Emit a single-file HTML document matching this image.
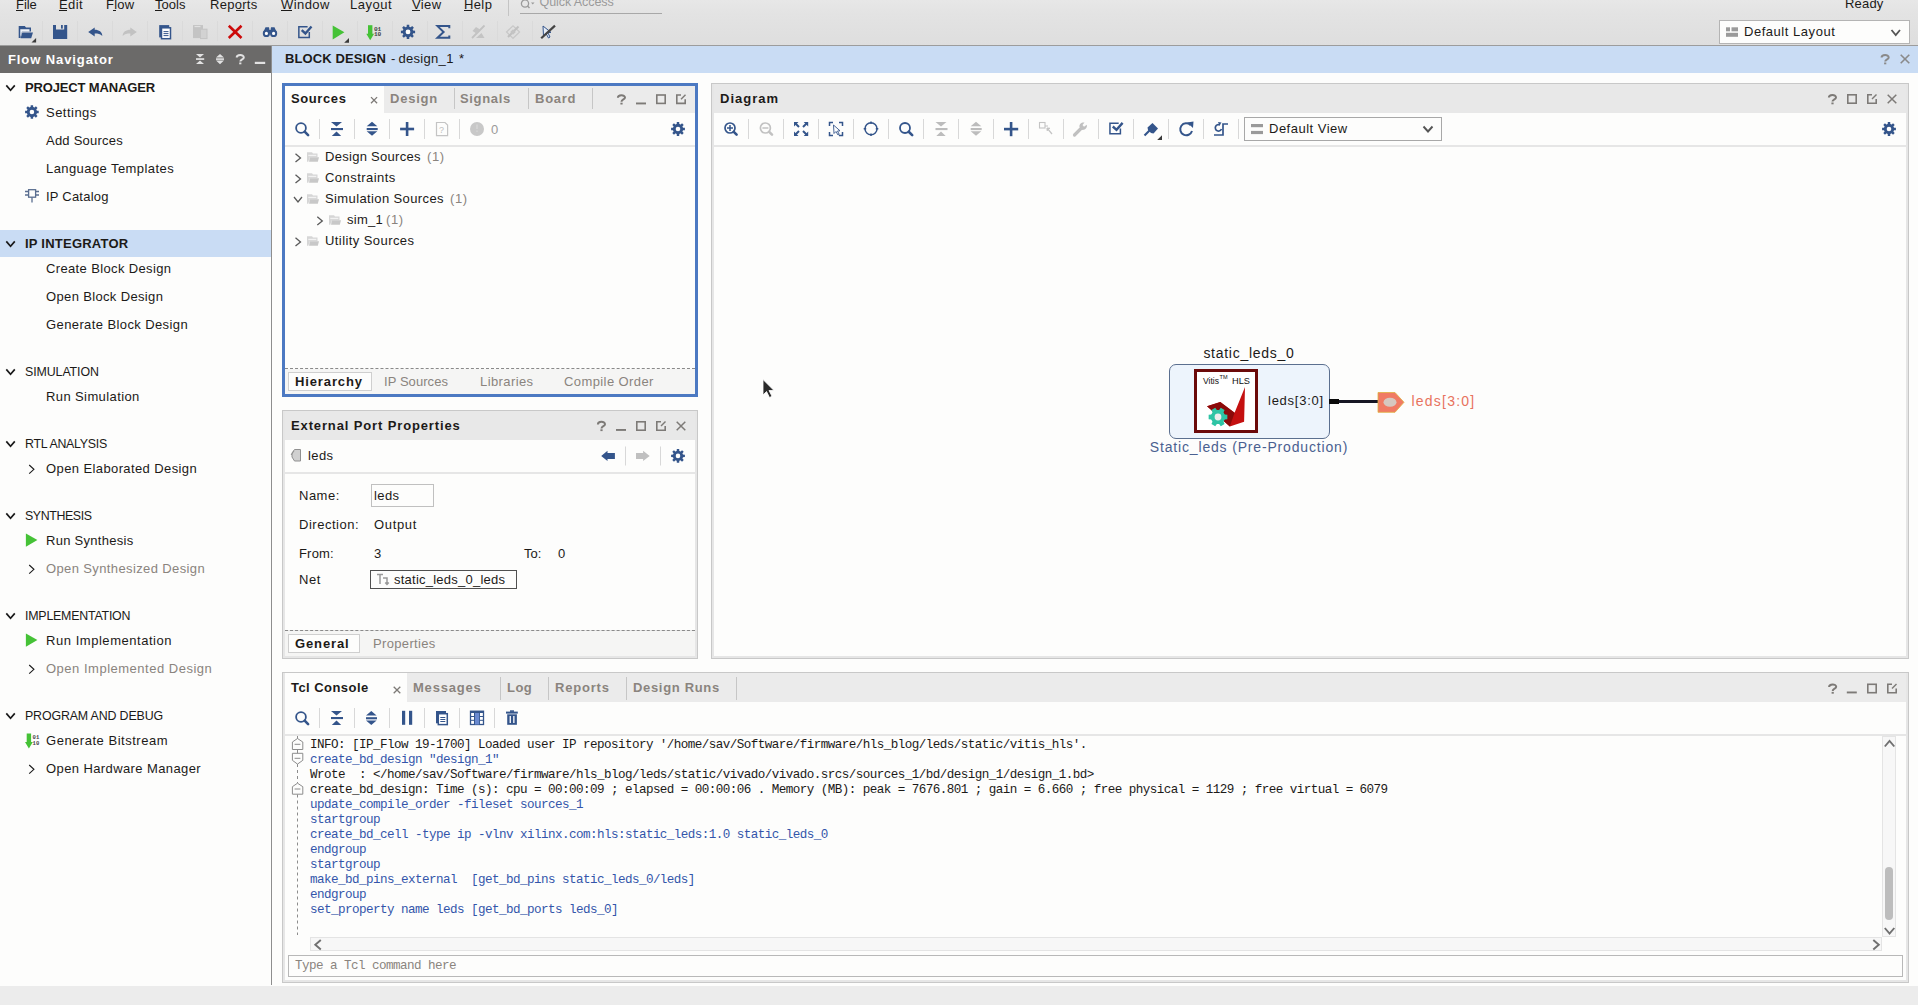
<!DOCTYPE html>
<html><head><meta charset="utf-8"><style>
html,body{margin:0;padding:0;}
body{width:1918px;height:1005px;position:relative;overflow:hidden;background:#fdfdfc;font-family:"Liberation Sans",sans-serif;}
body>div,body>svg{position:absolute;}
.t{white-space:pre;}
</style></head><body>
<div style="left:0px;top:0px;width:1918px;height:45px;background:linear-gradient(#e7e7e7,#e3e3e3 30%,#dedede);"></div>
<div style="left:0px;top:45px;width:1918px;height:1px;background:#9c9c9c;"></div>
<div class="t" style="left:16.00px;top:-5.50px;font-family:'Liberation Sans',sans-serif;font-size:13px;line-height:20px;color:#1c1a18;letter-spacing:-0.055px;">File</div>
<div class="t" style="left:59.00px;top:-5.50px;font-family:'Liberation Sans',sans-serif;font-size:13px;line-height:20px;color:#1c1a18;letter-spacing:0.398px;">Edit</div>
<div class="t" style="left:106.00px;top:-5.50px;font-family:'Liberation Sans',sans-serif;font-size:13px;line-height:20px;color:#1c1a18;letter-spacing:0.211px;">Flow</div>
<div class="t" style="left:155.00px;top:-5.50px;font-family:'Liberation Sans',sans-serif;font-size:13px;line-height:20px;color:#1c1a18;letter-spacing:0.034px;">Tools</div>
<div class="t" style="left:210.00px;top:-5.50px;font-family:'Liberation Sans',sans-serif;font-size:13px;line-height:20px;color:#1c1a18;letter-spacing:0.286px;">Reports</div>
<div class="t" style="left:281.00px;top:-5.50px;font-family:'Liberation Sans',sans-serif;font-size:13px;line-height:20px;color:#1c1a18;letter-spacing:0.435px;">Window</div>
<div class="t" style="left:350.00px;top:-5.50px;font-family:'Liberation Sans',sans-serif;font-size:13px;line-height:20px;color:#1c1a18;letter-spacing:0.513px;">Layout</div>
<div class="t" style="left:412.00px;top:-5.50px;font-family:'Liberation Sans',sans-serif;font-size:13px;line-height:20px;color:#1c1a18;letter-spacing:0.363px;">View</div>
<div class="t" style="left:464.00px;top:-5.50px;font-family:'Liberation Sans',sans-serif;font-size:13px;line-height:20px;color:#1c1a18;letter-spacing:0.375px;">Help</div>
<div style="left:508px;top:0px;width:1px;height:16px;background:#c4c4c4;"></div>
<div style="left:16px;top:10px;width:7px;height:1px;background:#1c1a18;"></div>
<div style="left:59px;top:10px;width:8px;height:1px;background:#1c1a18;"></div>
<div style="left:113px;top:10px;width:3px;height:1px;background:#1c1a18;"></div>
<div style="left:155px;top:10px;width:7px;height:1px;background:#1c1a18;"></div>
<div style="left:236px;top:10px;width:8px;height:1px;background:#1c1a18;"></div>
<div style="left:281px;top:10px;width:11px;height:1px;background:#1c1a18;"></div>
<div style="left:375px;top:10px;width:7px;height:1px;background:#1c1a18;"></div>
<div style="left:412px;top:10px;width:8px;height:1px;background:#1c1a18;"></div>
<div style="left:464px;top:10px;width:8px;height:1px;background:#1c1a18;"></div>
<div class="t" style="left:539.60px;top:-8.33px;font-family:'Liberation Sans',sans-serif;font-size:12.5px;line-height:20px;color:#9a9a9a;letter-spacing:-0.086px;">Quick Access</div>
<div style="left:520px;top:13px;width:142px;height:1px;background:#a8a8a8;"></div>
<div class="t" style="left:1845.00px;top:-6.50px;font-family:'Liberation Sans',sans-serif;font-size:13px;line-height:20px;color:#1c1a18;letter-spacing:0.178px;">Ready</div>
<div style="left:0px;top:46px;width:271px;height:27px;background:#6b6a69;"></div>
<div class="t" style="left:8.00px;top:49.50px;font-family:'Liberation Sans',sans-serif;font-size:13px;line-height:20px;color:#ffffff;font-weight:bold;letter-spacing:0.903px;">Flow Navigator</div>
<div style="left:271px;top:46px;width:1px;height:939px;background:#8e8e8e;"></div>
<div style="left:272px;top:46px;width:1646px;height:27px;background:#c9dcf4;"></div>
<div class="t" style="left:285.00px;top:48.50px;font-family:'Liberation Sans',sans-serif;font-size:13px;line-height:20px;color:#1c1a18;font-weight:bold;letter-spacing:0.111px;">BLOCK DESIGN</div>
<div class="t" style="left:391.00px;top:48.50px;font-family:'Liberation Sans',sans-serif;font-size:13px;line-height:20px;color:#1c1a18;">-</div>
<div class="t" style="left:398.50px;top:48.50px;font-family:'Liberation Sans',sans-serif;font-size:13px;line-height:20px;color:#1c1a18;letter-spacing:0.301px;">design_1</div>
<div class="t" style="left:459.00px;top:48.50px;font-family:'Liberation Sans',sans-serif;font-size:13px;line-height:20px;color:#1c1a18;">*</div>
<div style="left:0px;top:230px;width:271px;height:27px;background:#c9dcf4;"></div>
<div class="t" style="left:25.00px;top:77.50px;font-family:'Liberation Sans',sans-serif;font-size:13px;line-height:20px;color:#1c1a18;font-weight:bold;letter-spacing:-0.151px;">PROJECT MANAGER</div>
<div class="t" style="left:46.00px;top:102.50px;font-family:'Liberation Sans',sans-serif;font-size:13px;line-height:20px;color:#1c1a18;letter-spacing:0.480px;">Settings</div>
<div class="t" style="left:46.00px;top:130.50px;font-family:'Liberation Sans',sans-serif;font-size:13px;line-height:20px;color:#1c1a18;letter-spacing:0.229px;">Add Sources</div>
<div class="t" style="left:46.00px;top:158.50px;font-family:'Liberation Sans',sans-serif;font-size:13px;line-height:20px;color:#1c1a18;letter-spacing:0.424px;">Language Templates</div>
<div class="t" style="left:46.00px;top:186.50px;font-family:'Liberation Sans',sans-serif;font-size:13px;line-height:20px;color:#1c1a18;letter-spacing:0.219px;">IP Catalog</div>
<div class="t" style="left:25.00px;top:233.50px;font-family:'Liberation Sans',sans-serif;font-size:13px;line-height:20px;color:#1c1a18;font-weight:bold;letter-spacing:0.231px;">IP INTEGRATOR</div>
<div class="t" style="left:46.00px;top:258.50px;font-family:'Liberation Sans',sans-serif;font-size:13px;line-height:20px;color:#1c1a18;letter-spacing:0.360px;">Create Block Design</div>
<div class="t" style="left:46.00px;top:286.50px;font-family:'Liberation Sans',sans-serif;font-size:13px;line-height:20px;color:#1c1a18;letter-spacing:0.352px;">Open Block Design</div>
<div class="t" style="left:46.00px;top:314.50px;font-family:'Liberation Sans',sans-serif;font-size:13px;line-height:20px;color:#1c1a18;letter-spacing:0.398px;">Generate Block Design</div>
<div class="t" style="left:25.00px;top:361.70px;font-family:'Liberation Sans',sans-serif;font-size:12.4px;line-height:20px;color:#1c1a18;letter-spacing:-0.098px;">SIMULATION</div>
<div class="t" style="left:46.00px;top:386.50px;font-family:'Liberation Sans',sans-serif;font-size:13px;line-height:20px;color:#1c1a18;letter-spacing:0.396px;">Run Simulation</div>
<div class="t" style="left:25.00px;top:433.70px;font-family:'Liberation Sans',sans-serif;font-size:12.4px;line-height:20px;color:#1c1a18;letter-spacing:-0.273px;">RTL ANALYSIS</div>
<div class="t" style="left:46.00px;top:458.50px;font-family:'Liberation Sans',sans-serif;font-size:13px;line-height:20px;color:#1c1a18;letter-spacing:0.397px;">Open Elaborated Design</div>
<div class="t" style="left:25.00px;top:505.70px;font-family:'Liberation Sans',sans-serif;font-size:12.4px;line-height:20px;color:#1c1a18;letter-spacing:-0.399px;">SYNTHESIS</div>
<div class="t" style="left:46.00px;top:530.50px;font-family:'Liberation Sans',sans-serif;font-size:13px;line-height:20px;color:#1c1a18;letter-spacing:0.278px;">Run Synthesis</div>
<div class="t" style="left:46.00px;top:558.50px;font-family:'Liberation Sans',sans-serif;font-size:13px;line-height:20px;color:#8a847e;letter-spacing:0.379px;">Open Synthesized Design</div>
<div class="t" style="left:25.00px;top:605.70px;font-family:'Liberation Sans',sans-serif;font-size:12.4px;line-height:20px;color:#1c1a18;letter-spacing:-0.217px;">IMPLEMENTATION</div>
<div class="t" style="left:46.00px;top:630.50px;font-family:'Liberation Sans',sans-serif;font-size:13px;line-height:20px;color:#1c1a18;letter-spacing:0.542px;">Run Implementation</div>
<div class="t" style="left:46.00px;top:658.50px;font-family:'Liberation Sans',sans-serif;font-size:13px;line-height:20px;color:#8a847e;letter-spacing:0.507px;">Open Implemented Design</div>
<div class="t" style="left:25.00px;top:705.70px;font-family:'Liberation Sans',sans-serif;font-size:12.4px;line-height:20px;color:#1c1a18;letter-spacing:-0.148px;">PROGRAM AND DEBUG</div>
<div class="t" style="left:46.00px;top:730.50px;font-family:'Liberation Sans',sans-serif;font-size:13px;line-height:20px;color:#1c1a18;letter-spacing:0.517px;">Generate Bitstream</div>
<div class="t" style="left:46.00px;top:758.50px;font-family:'Liberation Sans',sans-serif;font-size:13px;line-height:20px;color:#1c1a18;letter-spacing:0.400px;">Open Hardware Manager</div>
<div style="left:282px;top:83px;width:416px;height:314px;border:3px solid #4c79c2;box-sizing:border-box;"></div>
<div style="left:285px;top:86px;width:410px;height:27px;background:#ebebeb;"></div>
<div style="left:285px;top:86px;width:99px;height:27px;background:#fdfdfc;"></div>
<div class="t" style="left:291.00px;top:88.50px;font-family:'Liberation Sans',sans-serif;font-size:13px;line-height:20px;color:#1c1a18;font-weight:bold;letter-spacing:0.598px;">Sources</div>
<div class="t" style="left:390.00px;top:88.50px;font-family:'Liberation Sans',sans-serif;font-size:13px;line-height:20px;color:#8a847e;font-weight:bold;letter-spacing:0.779px;">Design</div>
<div class="t" style="left:460.00px;top:88.50px;font-family:'Liberation Sans',sans-serif;font-size:13px;line-height:20px;color:#8a847e;font-weight:bold;letter-spacing:0.658px;">Signals</div>
<div class="t" style="left:535.00px;top:88.50px;font-family:'Liberation Sans',sans-serif;font-size:13px;line-height:20px;color:#8a847e;font-weight:bold;letter-spacing:0.750px;">Board</div>
<div style="left:454px;top:88px;width:1px;height:21px;background:#c6c6c6;"></div>
<div style="left:528px;top:88px;width:1px;height:21px;background:#c6c6c6;"></div>
<div style="left:592px;top:88px;width:1px;height:21px;background:#c6c6c6;"></div>
<div style="left:285px;top:113px;width:410px;height:32px;background:#fdfdfc;"></div>
<div style="left:285px;top:145px;width:410px;height:2px;background:#e6e6e6;"></div>
<div style="left:285px;top:147px;width:410px;height:221px;background:#fdfdfc;"></div>
<div style="left:285px;top:368px;width:410px;height:1px;border-top:1px dashed #8a8a8a;"></div>
<div style="left:285px;top:369px;width:410px;height:25px;background:#f5f5f4;"></div>
<div style="left:288px;top:372px;width:84px;height:19px;background:#fdfdfc;border:1px solid #cfcfcf;box-sizing:border-box;"></div>
<div class="t" style="left:295.00px;top:371.50px;font-family:'Liberation Sans',sans-serif;font-size:13px;line-height:20px;color:#1c1a18;font-weight:bold;letter-spacing:0.875px;">Hierarchy</div>
<div class="t" style="left:384.00px;top:371.50px;font-family:'Liberation Sans',sans-serif;font-size:13px;line-height:20px;color:#8a847e;letter-spacing:0.072px;">IP Sources</div>
<div class="t" style="left:480.00px;top:371.50px;font-family:'Liberation Sans',sans-serif;font-size:13px;line-height:20px;color:#8a847e;letter-spacing:0.406px;">Libraries</div>
<div class="t" style="left:564.00px;top:371.50px;font-family:'Liberation Sans',sans-serif;font-size:13px;line-height:20px;color:#8a847e;letter-spacing:0.407px;">Compile Order</div>
<div class="t" style="left:325.00px;top:146.50px;font-family:'Liberation Sans',sans-serif;font-size:13px;line-height:20px;color:#1c1a18;letter-spacing:0.282px;">Design Sources</div>
<div class="t" style="left:325.00px;top:167.50px;font-family:'Liberation Sans',sans-serif;font-size:13px;line-height:20px;color:#1c1a18;letter-spacing:0.450px;">Constraints</div>
<div class="t" style="left:325.00px;top:188.50px;font-family:'Liberation Sans',sans-serif;font-size:13px;line-height:20px;color:#1c1a18;letter-spacing:0.386px;">Simulation Sources</div>
<div class="t" style="left:347.00px;top:209.50px;font-family:'Liberation Sans',sans-serif;font-size:13px;line-height:20px;color:#1c1a18;letter-spacing:0.272px;">sim_1</div>
<div class="t" style="left:325.00px;top:230.50px;font-family:'Liberation Sans',sans-serif;font-size:13px;line-height:20px;color:#1c1a18;letter-spacing:0.422px;">Utility Sources</div>
<div class="t" style="left:427.00px;top:146.50px;font-family:'Liberation Sans',sans-serif;font-size:13px;line-height:20px;color:#8a847e;letter-spacing:0.557px;">(1)</div>
<div class="t" style="left:450.00px;top:188.50px;font-family:'Liberation Sans',sans-serif;font-size:13px;line-height:20px;color:#8a847e;letter-spacing:0.557px;">(1)</div>
<div class="t" style="left:386.00px;top:209.50px;font-family:'Liberation Sans',sans-serif;font-size:13px;line-height:20px;color:#8a847e;letter-spacing:0.557px;">(1)</div>
<div class="t" style="left:491.00px;top:119.50px;font-family:'Liberation Sans',sans-serif;font-size:13px;line-height:20px;color:#9a9a9a;">0</div>
<div style="left:282px;top:410px;width:416px;height:249px;background:#e6e6e6;border:1px solid #c8c8c8;box-sizing:border-box;"></div>
<div style="left:285px;top:411px;width:410px;height:29px;background:#e8e8e8;"></div>
<div class="t" style="left:291.00px;top:415.50px;font-family:'Liberation Sans',sans-serif;font-size:13px;line-height:20px;color:#1c1a18;font-weight:bold;letter-spacing:0.867px;">External Port Properties</div>
<div style="left:285px;top:440px;width:410px;height:32px;background:#fdfdfc;"></div>
<div style="left:285px;top:472px;width:410px;height:2px;background:#e6e6e6;"></div>
<div style="left:285px;top:474px;width:410px;height:156px;background:#fdfdfc;"></div>
<div class="t" style="left:308.00px;top:445.50px;font-family:'Liberation Sans',sans-serif;font-size:13px;line-height:20px;color:#1c1a18;letter-spacing:0.383px;">leds</div>
<div class="t" style="left:299.00px;top:485.50px;font-family:'Liberation Sans',sans-serif;font-size:13px;line-height:20px;color:#1c1a18;letter-spacing:0.487px;">Name:</div>
<div style="left:371px;top:484px;width:63px;height:23px;background:#fdfdfc;border:1px solid #c0c0c0;box-sizing:border-box;"></div>
<div class="t" style="left:374.00px;top:485.50px;font-family:'Liberation Sans',sans-serif;font-size:13px;line-height:20px;color:#1c1a18;letter-spacing:0.383px;">leds</div>
<div class="t" style="left:299.00px;top:514.50px;font-family:'Liberation Sans',sans-serif;font-size:13px;line-height:20px;color:#1c1a18;letter-spacing:0.523px;">Direction:</div>
<div class="t" style="left:374.00px;top:514.50px;font-family:'Liberation Sans',sans-serif;font-size:13px;line-height:20px;color:#1c1a18;letter-spacing:0.669px;">Output</div>
<div class="t" style="left:299.00px;top:543.50px;font-family:'Liberation Sans',sans-serif;font-size:13px;line-height:20px;color:#1c1a18;letter-spacing:0.184px;">From:</div>
<div class="t" style="left:374.00px;top:543.50px;font-family:'Liberation Sans',sans-serif;font-size:13px;line-height:20px;color:#1c1a18;">3</div>
<div class="t" style="left:524.00px;top:543.50px;font-family:'Liberation Sans',sans-serif;font-size:13px;line-height:20px;color:#1c1a18;letter-spacing:-0.042px;">To:</div>
<div class="t" style="left:558.00px;top:543.50px;font-family:'Liberation Sans',sans-serif;font-size:13px;line-height:20px;color:#1c1a18;">0</div>
<div class="t" style="left:299.00px;top:569.50px;font-family:'Liberation Sans',sans-serif;font-size:13px;line-height:20px;color:#1c1a18;letter-spacing:0.510px;">Net</div>
<div style="left:370px;top:570px;width:147px;height:19px;background:#fdfdfc;border:1px solid #505050;box-sizing:border-box;"></div>
<div class="t" style="left:394.00px;top:569.50px;font-family:'Liberation Sans',sans-serif;font-size:13px;line-height:20px;color:#1c1a18;letter-spacing:0.239px;">static_leds_0_leds</div>
<div style="left:285px;top:630px;width:410px;height:1px;border-top:1px dashed #8a8a8a;"></div>
<div style="left:285px;top:631px;width:410px;height:25px;background:#f5f5f4;"></div>
<div style="left:288px;top:634px;width:72px;height:19px;background:#fdfdfc;border:1px solid #cfcfcf;box-sizing:border-box;"></div>
<div class="t" style="left:295.00px;top:633.50px;font-family:'Liberation Sans',sans-serif;font-size:13px;line-height:20px;color:#1c1a18;font-weight:bold;letter-spacing:0.873px;">General</div>
<div class="t" style="left:373.00px;top:633.50px;font-family:'Liberation Sans',sans-serif;font-size:13px;line-height:20px;color:#8a847e;letter-spacing:0.338px;">Properties</div>
<div style="left:711px;top:83px;width:198px;height:1px;"></div>
<div style="left:711px;top:83px;width:198px;height:576px;background:#e6e6e6;border:1px solid #c8c8c8;box-sizing:border-box;"></div>
<div style="left:711px;top:83px;width:1198px;height:576px;background:#e6e6e6;border:1px solid #c8c8c8;box-sizing:border-box;"></div>
<div style="left:714px;top:84px;width:1192px;height:29px;background:#e8e8e8;"></div>
<div class="t" style="left:720.00px;top:88.50px;font-family:'Liberation Sans',sans-serif;font-size:13px;line-height:20px;color:#1c1a18;font-weight:bold;letter-spacing:1.018px;">Diagram</div>
<div style="left:714px;top:113px;width:1192px;height:32px;background:#fdfdfc;"></div>
<div style="left:714px;top:145px;width:1192px;height:2px;background:#e6e6e6;"></div>
<div style="left:714px;top:147px;width:1192px;height:509px;background:#fdfdfc;"></div>
<div style="left:1244px;top:117px;width:198px;height:24px;background:#fdfdfc;border:1px solid #a8a8a8;box-sizing:border-box;"></div>
<div class="t" style="left:1269.00px;top:118.50px;font-family:'Liberation Sans',sans-serif;font-size:13px;line-height:20px;color:#1c1a18;letter-spacing:0.490px;">Default View</div>
<div style="left:282px;top:672px;width:1627px;height:311px;background:#e6e6e6;border:1px solid #c8c8c8;box-sizing:border-box;"></div>
<div style="left:285px;top:673px;width:1621px;height:29px;background:#ebebeb;"></div>
<div style="left:285px;top:673px;width:122px;height:29px;background:#fdfdfc;"></div>
<div class="t" style="left:291.00px;top:677.50px;font-family:'Liberation Sans',sans-serif;font-size:13px;line-height:20px;color:#1c1a18;font-weight:bold;letter-spacing:0.452px;">Tcl Console</div>
<div class="t" style="left:413.00px;top:677.50px;font-family:'Liberation Sans',sans-serif;font-size:13px;line-height:20px;color:#8a847e;font-weight:bold;letter-spacing:0.793px;">Messages</div>
<div class="t" style="left:507.00px;top:677.50px;font-family:'Liberation Sans',sans-serif;font-size:13px;line-height:20px;color:#8a847e;font-weight:bold;letter-spacing:0.484px;">Log</div>
<div class="t" style="left:555.00px;top:677.50px;font-family:'Liberation Sans',sans-serif;font-size:13px;line-height:20px;color:#8a847e;font-weight:bold;letter-spacing:0.804px;">Reports</div>
<div class="t" style="left:633.00px;top:677.50px;font-family:'Liberation Sans',sans-serif;font-size:13px;line-height:20px;color:#8a847e;font-weight:bold;letter-spacing:0.673px;">Design Runs</div>
<div style="left:500px;top:677px;width:1px;height:23px;background:#c6c6c6;"></div>
<div style="left:548px;top:677px;width:1px;height:23px;background:#c6c6c6;"></div>
<div style="left:626px;top:677px;width:1px;height:23px;background:#c6c6c6;"></div>
<div style="left:736px;top:677px;width:1px;height:23px;background:#c6c6c6;"></div>
<div style="left:285px;top:702px;width:1621px;height:32px;background:#fdfdfc;"></div>
<div style="left:285px;top:734px;width:1621px;height:2px;background:#e6e6e6;"></div>
<div style="left:285px;top:736px;width:1621px;height:244px;background:#fdfdfc;"></div>
<div class="t" style="left:310.00px;top:734.64px;font-family:'Liberation Mono',monospace;font-size:12.6px;line-height:20px;color:#1c1a18;letter-spacing:-0.560px;">INFO: [IP_Flow 19-1700] Loaded user IP repository &#x27;/home/sav/Software/firmware/hls_blog/leds/static/vitis_hls&#x27;.</div>
<div class="t" style="left:310.00px;top:749.64px;font-family:'Liberation Mono',monospace;font-size:12.6px;line-height:20px;color:#3355aa;letter-spacing:-0.560px;">create_bd_design &quot;design_1&quot;</div>
<div class="t" style="left:310.00px;top:764.64px;font-family:'Liberation Mono',monospace;font-size:12.6px;line-height:20px;color:#1c1a18;letter-spacing:-0.560px;">Wrote  : &lt;/home/sav/Software/firmware/hls_blog/leds/static/vivado/vivado.srcs/sources_1/bd/design_1/design_1.bd&gt;</div>
<div class="t" style="left:310.00px;top:779.64px;font-family:'Liberation Mono',monospace;font-size:12.6px;line-height:20px;color:#1c1a18;letter-spacing:-0.560px;">create_bd_design: Time (s): cpu = 00:00:09 ; elapsed = 00:00:06 . Memory (MB): peak = 7676.801 ; gain = 6.660 ; free physical = 1129 ; free virtual = 6079</div>
<div class="t" style="left:310.00px;top:794.64px;font-family:'Liberation Mono',monospace;font-size:12.6px;line-height:20px;color:#3355aa;letter-spacing:-0.560px;">update_compile_order -fileset sources_1</div>
<div class="t" style="left:310.00px;top:809.64px;font-family:'Liberation Mono',monospace;font-size:12.6px;line-height:20px;color:#3355aa;letter-spacing:-0.560px;">startgroup</div>
<div class="t" style="left:310.00px;top:824.64px;font-family:'Liberation Mono',monospace;font-size:12.6px;line-height:20px;color:#3355aa;letter-spacing:-0.560px;">create_bd_cell -type ip -vlnv xilinx.com:hls:static_leds:1.0 static_leds_0</div>
<div class="t" style="left:310.00px;top:839.64px;font-family:'Liberation Mono',monospace;font-size:12.6px;line-height:20px;color:#3355aa;letter-spacing:-0.560px;">endgroup</div>
<div class="t" style="left:310.00px;top:854.64px;font-family:'Liberation Mono',monospace;font-size:12.6px;line-height:20px;color:#3355aa;letter-spacing:-0.560px;">startgroup</div>
<div class="t" style="left:310.00px;top:869.64px;font-family:'Liberation Mono',monospace;font-size:12.6px;line-height:20px;color:#3355aa;letter-spacing:-0.560px;">make_bd_pins_external  [get_bd_pins static_leds_0/leds]</div>
<div class="t" style="left:310.00px;top:884.64px;font-family:'Liberation Mono',monospace;font-size:12.6px;line-height:20px;color:#3355aa;letter-spacing:-0.560px;">endgroup</div>
<div class="t" style="left:310.00px;top:899.64px;font-family:'Liberation Mono',monospace;font-size:12.6px;line-height:20px;color:#3355aa;letter-spacing:-0.560px;">set_property name leds [get_bd_ports leds_0]</div>
<div style="left:1882px;top:736px;width:14px;height:201px;background:#f7f7f7;border:1px solid #e4e4e4;box-sizing:border-box;"></div>
<div style="left:1885px;top:867px;width:8px;height:53px;background:#bdbdbd;border-radius:4px;"></div>
<div style="left:310px;top:937px;width:1572px;height:14px;background:#f7f7f7;border:1px solid #e4e4e4;box-sizing:border-box;"></div>
<div style="left:288px;top:955px;width:1615px;height:22px;background:#fdfdfc;border:1px solid #b8b8b8;box-sizing:border-box;"></div>
<div class="t" style="left:295.00px;top:955.64px;font-family:'Liberation Mono',monospace;font-size:12.6px;line-height:20px;color:#8a847e;letter-spacing:-0.560px;">Type a Tcl command here</div>
<div style="left:0px;top:986px;width:1918px;height:19px;background:#ececec;"></div>
<div style="left:1719px;top:20px;width:191px;height:24px;background:#fdfdfc;border:1px solid #b4b4b4;box-sizing:border-box;"></div>
<div class="t" style="left:1744.00px;top:21.50px;font-family:'Liberation Sans',sans-serif;font-size:13px;line-height:20px;color:#1c1a18;letter-spacing:0.536px;">Default Layout</div>
<div class="t" style="left:1203.38px;top:343.15px;font-family:'Liberation Sans',sans-serif;font-size:14px;line-height:20px;color:#1c1a18;letter-spacing:0.733px;">static_leds_0</div>
<div style="left:1169px;top:364px;width:161px;height:75px;background:#edf4fc;border:1px solid #5b6f8f;box-sizing:border-box;border-radius:7px;"></div>
<div style="left:1194px;top:369px;width:64px;height:64px;background:#ffffff;border:3px solid #6b0a0a;box-sizing:border-box;"></div>
<div class="t" style="left:1268.00px;top:390.50px;font-family:'Liberation Sans',sans-serif;font-size:13px;line-height:20px;color:#1c1a18;letter-spacing:0.750px;">leds[3:0]</div>
<div class="t" style="left:1149.87px;top:437.15px;font-family:'Liberation Sans',sans-serif;font-size:14px;line-height:20px;color:#4a6090;letter-spacing:0.828px;">Static_leds (Pre-Production)</div>
<div style="left:1329px;top:399px;width:10px;height:5px;background:#0a0a0a;"></div>
<div style="left:1339px;top:400px;width:40px;height:3px;background:#161624;"></div>
<div class="t" style="left:1411.50px;top:391.15px;font-family:'Liberation Sans',sans-serif;font-size:14px;line-height:20px;color:#e8735e;letter-spacing:1.215px;">leds[3:0]</div>
<svg style="left:0;top:0" width="1918" height="1005"><rect x="42" y="21" width="1" height="20" fill="#dadada"/><rect x="77" y="21" width="1" height="20" fill="#dadada"/><rect x="112" y="21" width="1" height="20" fill="#dadada"/><rect x="147" y="21" width="1" height="20" fill="#dadada"/><rect x="182" y="21" width="1" height="20" fill="#dadada"/><rect x="217" y="21" width="1" height="20" fill="#dadada"/><rect x="252" y="21" width="1" height="20" fill="#dadada"/><rect x="287" y="21" width="1" height="20" fill="#dadada"/><rect x="322" y="21" width="1" height="20" fill="#dadada"/><rect x="357" y="21" width="1" height="20" fill="#dadada"/><rect x="392" y="21" width="1" height="20" fill="#dadada"/><rect x="427" y="21" width="1" height="20" fill="#dadada"/><rect x="462" y="21" width="1" height="20" fill="#dadada"/><rect x="497" y="21" width="1" height="20" fill="#dadada"/><rect x="532" y="21" width="1" height="20" fill="#dadada"/><path d="M18.7,38 L18.7,26 L24.8,26 L26,27.6 L31,27.6 L31,31.5 L22,31.5 L20.5,38Z" fill="#34558b"/><path d="M20.3,37.5 L20.3,29.2 L29.5,29.2 L29.5,31.5 L22,31.5Z" fill="#eef2f8"/><path d="M22.3,32.6 L33,32.6 L31.2,38.2 L20.6,38.2Z" fill="#34558b"/><path d="M36.1,38 L36.1,42.6 L31.5,42.6Z" fill="#3a3a3a"/><path d="M53,25 L67.2,25 L67.2,39 L53,39Z M56,25 L56,29.5 L64.2,29.5 L64.2,25Z" fill="#34558b" fill-rule="evenodd"/><rect x="61" y="25" width="1.8" height="3.6" fill="#34558b"/><path d="M88.2,31.9 L94.7,27.4 L94.7,29.8 C99,29.8 102.3,32 102.3,36 C100.5,34 98,33.6 94.7,33.6 L94.7,36.6Z" fill="#34558b"/><path d="M136.8,31.9 L130.3,27.4 L130.3,29.8 C126,29.8 122.7,32 122.7,36 C124.5,34 127,33.6 130.3,33.6 L130.3,36.6Z" fill="#c2c2c2"/><rect x="159.2" y="25.1" width="10" height="12.3" fill="#34558b"/><rect x="161.5" y="27.8" width="9" height="10.9" fill="#ffffff" stroke="#34558b" stroke-width="1.5"/><rect x="163.5" y="31.1" width="5" height="1" fill="#34558b"/><rect x="163.5" y="33.1" width="5" height="1" fill="#34558b"/><rect x="163.5" y="35.1" width="5" height="1" fill="#34558b"/><rect x="193" y="25.1" width="10" height="13" fill="#c4c4c4"/><rect x="200.5" y="29.2" width="6.5" height="9.4" fill="#d2d2d2" stroke="#c4c4c4" stroke-width="1"/><rect x="194.5" y="26.2" width="6" height="0.9" fill="#e8e8e8"/><path d="M228.8,25.8 L241.5,38 M241.5,25.8 L228.8,38" stroke="#cc0a0a" stroke-width="2.6"/><path d="M263,33 L265.5,27.3 L269,27.3 L269.5,30 L270.5,30 L271,27.3 L274.5,27.3 L277,33 Z" fill="#34558b"/><circle cx="266.4" cy="33.4" r="2.6" fill="#fff" stroke="#34558b" stroke-width="2"/><circle cx="273.6" cy="33.4" r="2.6" fill="#fff" stroke="#34558b" stroke-width="2"/><path d="M307.6,26.85 L298.85,26.85 L298.85,37.400000000000006 L309.3,37.400000000000006 L309.3,32.1" fill="none" stroke="#34558b" stroke-width="1.5"/><path d="M301.70000000000005,30.1 L305.40000000000003,33.5 L311.5,26.5" fill="none" stroke="#34558b" stroke-width="2.4"/><path d="M332.7,25.6 L344.4,32.3 L332.7,39.4Z" fill="#45c236"/><path d="M349.0,38 L349.0,42.8 L344.2,42.8Z" fill="#3a3a3a"/><rect x="368.0" y="25.2" width="4.4" height="9" fill="#45c236"/><path d="M366.3,33.7 L374.1,33.7 L370.2,40.2Z" fill="#45c236"/><text x="373.90000000000003" y="30.5" font-family="Liberation Mono" font-size="6.2" font-weight="bold" fill="#444">01</text><text x="373.90000000000003" y="36.2" font-family="Liberation Mono" font-size="6.2" font-weight="bold" fill="#444">10</text><path d="M412.92,30.54 L415.09,30.66 L415.09,33.14 L412.92,33.26 L412.44,34.41 L413.89,36.04 L412.14,37.79 L410.51,36.34 L409.36,36.82 L409.24,38.99 L406.76,38.99 L406.64,36.82 L405.49,36.34 L403.86,37.79 L402.11,36.04 L403.56,34.41 L403.08,33.26 L400.91,33.14 L400.91,30.66 L403.08,30.54 L403.56,29.39 L402.11,27.76 L403.86,26.01 L405.49,27.46 L406.64,26.98 L406.76,24.81 L409.24,24.81 L409.36,26.98 L410.51,27.46 L412.14,26.01 L413.89,27.76 L412.44,29.39Z" fill="#34558b"/><circle cx="408" cy="31.9" r="5.1" fill="#34558b"/><circle cx="408" cy="31.9" r="2.4" fill="#fdfdfc"/><path d="M449.3,28.3 L449.3,26.1 L437.5,26.1 L443.6,32 L437.5,37.7 L449.3,37.7 L449.3,35.5" fill="none" stroke="#34558b" stroke-width="2"/><path d="M472,38 L484.5,25.5" stroke="#c2c2c2" stroke-width="1.8"/><path d="M472.5,31 L476,27 L480,29.5 L476.5,33.5Z" fill="#c4c4c4"/><path d="M476,38 L484.5,38 L481.5,33Z" fill="#c4c4c4"/><path d="M506.5,32 L513,25.8 L519.6,32 L513,38.3Z" fill="none" stroke="#c8c8c8" stroke-width="1.2"/><path d="M508,37 L518.5,26.5" stroke="#c0c0c0" stroke-width="2"/><rect x="511" y="30" width="4" height="4" fill="#c4c4c4" transform="rotate(-45 513 32)"/><path d="M543,26 L543.5,36 L546,33.5 L548.5,38 L550,37 L547.8,32.6 L551,32.4Z" fill="#e8eef8" stroke="#34558b" stroke-width="1"/><path d="M541.2,38.3 L555,25.6" stroke="#444" stroke-width="2.2"/><circle cx="525" cy="3.5" r="3.6" fill="none" stroke="#9a9a9a" stroke-width="1.3"/><path d="M527.5,6 L529.5,8" stroke="#9a9a9a" stroke-width="1.5"/><path d="M531,2.5 L534.5,2.5 L532.75,4.5Z" fill="#9a9a9a"/><rect x="1726" y="27.3" width="4" height="4" fill="#9a9a9a"/><rect x="1731.5" y="27.3" width="6.5" height="4" fill="#9a9a9a"/><rect x="1726" y="32.8" width="12" height="4" fill="#9a9a9a"/><path d="M1891.5,30 L1895.75,35 L1900.0,30" fill="none" stroke="#555" stroke-width="1.8"/><path d="M196,54 L204,54 L200,57.5Z M196,64 L204,64 L200,60.5Z" fill="#e2e2e2"/><rect x="196" y="58.2" width="8.2" height="1.7" fill="#e2e2e2"/><path d="M216,57.6 L224,57.6 L220,54Z M216,60.6 L224,60.6 L220,64.2Z" fill="#e2e2e2"/><rect x="216" y="58.3" width="8" height="1.6" fill="#e2e2e2"/><path d="M236.7,57.6 C236.7,54.2 243.79999999999998,54.2 243.79999999999998,57.4 C243.79999999999998,59.4 240.29999999999998,59.2 240.29999999999998,61.6" fill="none" stroke="#e2e2e2" stroke-width="2"/><rect x="239.2" y="62.5" width="2.2" height="1.8" fill="#e2e2e2"/><rect x="254.8" y="61.8" width="10.4" height="2.2" fill="#e2e2e2"/><path d="M1881.6,57.6 C1881.6,54.2 1888.7,54.2 1888.7,57.4 C1888.7,59.4 1885.2,59.2 1885.2,61.6" fill="none" stroke="#8a8a8a" stroke-width="2"/><rect x="1884.1" y="62.5" width="2.2" height="1.8" fill="#8a8a8a"/><path d="M1900.7,54.7 L1909.3,63.3 M1909.3,54.7 L1900.7,63.3" stroke="#8a8a8a" stroke-width="1.6" fill="none"/><path d="M6.3,85.4 L10.55,90.2 L14.8,85.4" fill="none" stroke="#1a1a1a" stroke-width="1.7"/><path d="M6.3,241.4 L10.55,246.20000000000002 L14.8,241.4" fill="none" stroke="#1a1a1a" stroke-width="1.7"/><path d="M6.3,369.4 L10.55,374.2 L14.8,369.4" fill="none" stroke="#1a1a1a" stroke-width="1.7"/><path d="M6.3,441.4 L10.55,446.2 L14.8,441.4" fill="none" stroke="#1a1a1a" stroke-width="1.7"/><path d="M6.3,513.4 L10.55,518.1999999999999 L14.8,513.4" fill="none" stroke="#1a1a1a" stroke-width="1.7"/><path d="M6.3,613.4 L10.55,618.1999999999999 L14.8,613.4" fill="none" stroke="#1a1a1a" stroke-width="1.7"/><path d="M6.3,713.4 L10.55,718.1999999999999 L14.8,713.4" fill="none" stroke="#1a1a1a" stroke-width="1.7"/><path d="M36.62,110.69 L38.70,110.81 L38.70,113.19 L36.62,113.31 L36.16,114.42 L37.55,115.97 L35.87,117.65 L34.32,116.26 L33.21,116.72 L33.09,118.80 L30.71,118.80 L30.59,116.72 L29.48,116.26 L27.93,117.65 L26.25,115.97 L27.64,114.42 L27.18,113.31 L25.10,113.19 L25.10,110.81 L27.18,110.69 L27.64,109.58 L26.25,108.03 L27.93,106.35 L29.48,107.74 L30.59,107.28 L30.71,105.20 L33.09,105.20 L33.21,107.28 L34.32,107.74 L35.87,106.35 L37.55,108.03 L36.16,109.58Z" fill="#34558b"/><circle cx="31.9" cy="112" r="4.9" fill="#34558b"/><circle cx="31.9" cy="112" r="2.3" fill="#fdfdfc"/><rect x="28.6" y="189.7" width="7" height="7.5" fill="none" stroke="#5a6e90" stroke-width="1.3"/><path d="M25,191.5 L28.6,191.5 M25,195 L28.6,195 M35.6,191.5 L39,191.5 M35.6,195 L39,195 M32,197.2 L32,202.6" stroke="#5a6e90" stroke-width="1.3"/><path d="M29.2,465 L33.9,469.3 L29.2,473.6" fill="none" stroke="#1e1e1e" stroke-width="1.15"/><path d="M29.2,565 L33.9,569.3 L29.2,573.6" fill="none" stroke="#1e1e1e" stroke-width="1.15"/><path d="M29.2,665 L33.9,669.3 L29.2,673.6" fill="none" stroke="#1e1e1e" stroke-width="1.15"/><path d="M29.2,765 L33.9,769.3 L29.2,773.6" fill="none" stroke="#1e1e1e" stroke-width="1.15"/><path d="M25.9,533.4 L37.4,540.1 L25.9,546.8Z" fill="#45c236"/><path d="M25.9,633.4 L37.4,640.1 L25.9,646.8Z" fill="#45c236"/><rect x="26.7" y="733.5" width="4.4" height="9" fill="#45c236"/><path d="M25,742.0 L32.8,742.0 L28.9,748.5Z" fill="#45c236"/><text x="32.6" y="738.8" font-family="Liberation Mono" font-size="5.6" font-weight="bold" fill="#444">01</text><text x="32.6" y="744.5" font-family="Liberation Mono" font-size="5.6" font-weight="bold" fill="#444">10</text><path d="M371.0,97.10000000000001 L377.1,103.2 M377.1,97.10000000000001 L371.0,103.2" stroke="#7d7a77" stroke-width="1.3" fill="none"/><path d="M617.9,97.8 C617.9,94.4 625.0,94.4 625.0,97.60000000000001 C625.0,99.60000000000001 621.5,99.4 621.5,101.8" fill="none" stroke="#7d7a77" stroke-width="2"/><rect x="620.4" y="102.7" width="2.2" height="1.8" fill="#7d7a77"/><rect x="636" y="102.5" width="10" height="1.9" fill="#7d7a77"/><rect x="656.8" y="95.0" width="8.4" height="8.4" fill="none" stroke="#7d7a77" stroke-width="1.6"/><path d="M681,95.0 L676.8,95.0 L676.8,103.4 L685.2,103.4 L685.2,99.2" fill="none" stroke="#7d7a77" stroke-width="1.6"/><line x1="681" y1="99.2" x2="685.5" y2="94.7" stroke="#7d7a77" stroke-width="1.4"/><circle cx="301" cy="128" r="4.9" fill="none" stroke="#34558b" stroke-width="1.8"/><line x1="304.68" y1="131.68" x2="308.10" y2="135.10" stroke="#34558b" stroke-width="2.6" stroke-linecap="round"/><path d="M331,122 L342,122 L336.5,126.4Z M331.8,135.9 L341.2,135.9 L336.5,131.5Z" fill="#34558b"/><rect x="331" y="128" width="12" height="2.1" fill="#34558b"/><path d="M366.7,126.3 L377.3,126.3 L372.0,121.8Z M366.7,131.2 L377.3,131.2 L372.0,135.8Z" fill="#34558b"/><rect x="366.7" y="128.0" width="11" height="2.1" fill="#34558b"/><rect x="400.1" y="127.7" width="14" height="2.6" fill="#34558b"/><rect x="405.8" y="122" width="2.6" height="14" fill="#34558b"/><path d="M436.5,122.5 L445,122.5 L447.6,125 L447.6,135.6 L436.5,135.6Z" fill="none" stroke="#c4c4c4" stroke-width="1.2"/><text x="439" y="132.8" font-family="Liberation Sans" font-size="9" fill="#c0c0c0">?</text><circle cx="477" cy="129" r="7" fill="#c8c8c8"/><rect x="476.3" y="124.5" width="1.4" height="4.5" fill="#d6d6d6"/><rect x="476.3" y="130.5" width="1.4" height="1.4" fill="#d6d6d6"/><path d="M682.72,127.69 L684.90,127.80 L684.90,130.20 L682.72,130.31 L682.26,131.42 L683.73,133.03 L682.03,134.73 L680.42,133.26 L679.31,133.72 L679.20,135.90 L676.80,135.90 L676.69,133.72 L675.58,133.26 L673.97,134.73 L672.27,133.03 L673.74,131.42 L673.28,130.31 L671.10,130.20 L671.10,127.80 L673.28,127.69 L673.74,126.58 L672.27,124.97 L673.97,123.27 L675.58,124.74 L676.69,124.28 L676.80,122.10 L679.20,122.10 L679.31,124.28 L680.42,124.74 L682.03,123.27 L683.73,124.97 L682.26,126.58Z" fill="#34558b"/><circle cx="678" cy="129" r="4.9" fill="#34558b"/><circle cx="678" cy="129" r="2.3" fill="#fdfdfc"/><rect x="319" y="119" width="1" height="20" fill="#d8d8d8"/><rect x="354" y="119" width="1" height="20" fill="#d8d8d8"/><rect x="389" y="119" width="1" height="20" fill="#d8d8d8"/><rect x="424" y="119" width="1" height="20" fill="#d8d8d8"/><rect x="459" y="119" width="1" height="20" fill="#d8d8d8"/><path d="M295.5,153.7 L300.5,157.89999999999998 L295.5,162.1" fill="none" stroke="#5a5a5a" stroke-width="1.3"/><path d="M295.5,174.7 L300.5,178.89999999999998 L295.5,183.1" fill="none" stroke="#5a5a5a" stroke-width="1.3"/><path d="M317.3,216.7 L322.3,220.89999999999998 L317.3,225.1" fill="none" stroke="#5a5a5a" stroke-width="1.3"/><path d="M295.5,237.7 L300.5,241.89999999999998 L295.5,246.1" fill="none" stroke="#5a5a5a" stroke-width="1.3"/><path d="M294,197 L298.0,202 L302,197" fill="none" stroke="#5a5a5a" stroke-width="1.3"/><path d="M307,152.2 L312,152.2 L313,153.5 L317.5,153.5 L317.5,157.2 L309.6,157.2 L308.4,161.79999999999998 L307,161.79999999999998Z" fill="#d6d6d6"/><rect x="308.3" y="154.79999999999998" width="8" height="1.3" fill="#f2f2f2"/><path d="M309.7,157.29999999999998 L319,157.29999999999998 L317.8,161.79999999999998 L309.1,161.79999999999998Z" fill="#c8c8c8"/><path d="M307,173.2 L312,173.2 L313,174.5 L317.5,174.5 L317.5,178.2 L309.6,178.2 L308.4,182.79999999999998 L307,182.79999999999998Z" fill="#d6d6d6"/><rect x="308.3" y="175.79999999999998" width="8" height="1.3" fill="#f2f2f2"/><path d="M309.7,178.29999999999998 L319,178.29999999999998 L317.8,182.79999999999998 L309.1,182.79999999999998Z" fill="#c8c8c8"/><path d="M307,194.2 L312,194.2 L313,195.5 L317.5,195.5 L317.5,199.2 L309.6,199.2 L308.4,203.79999999999998 L307,203.79999999999998Z" fill="#d6d6d6"/><rect x="308.3" y="196.79999999999998" width="8" height="1.3" fill="#f2f2f2"/><path d="M309.7,199.29999999999998 L319,199.29999999999998 L317.8,203.79999999999998 L309.1,203.79999999999998Z" fill="#c8c8c8"/><path d="M329,215.2 L334,215.2 L335,216.5 L339.5,216.5 L339.5,220.2 L331.6,220.2 L330.4,224.79999999999998 L329,224.79999999999998Z" fill="#d6d6d6"/><rect x="330.3" y="217.79999999999998" width="8" height="1.3" fill="#f2f2f2"/><path d="M331.7,220.29999999999998 L341,220.29999999999998 L339.8,224.79999999999998 L331.1,224.79999999999998Z" fill="#c8c8c8"/><path d="M307,236.2 L312,236.2 L313,237.5 L317.5,237.5 L317.5,241.2 L309.6,241.2 L308.4,245.79999999999998 L307,245.79999999999998Z" fill="#d6d6d6"/><rect x="308.3" y="238.79999999999998" width="8" height="1.3" fill="#f2f2f2"/><path d="M309.7,241.29999999999998 L319,241.29999999999998 L317.8,245.79999999999998 L309.1,245.79999999999998Z" fill="#c8c8c8"/><path d="M597.9,424.40000000000003 C597.9,421.0 605.0,421.0 605.0,424.2 C605.0,426.2 601.5,426.0 601.5,428.40000000000003" fill="none" stroke="#7d7a77" stroke-width="2"/><rect x="600.4" y="429.3" width="2.2" height="1.8" fill="#7d7a77"/><rect x="616" y="429" width="10" height="1.9" fill="#7d7a77"/><rect x="636.8" y="421.8" width="8.4" height="8.4" fill="none" stroke="#7d7a77" stroke-width="1.6"/><path d="M661,421.8 L656.8,421.8 L656.8,430.2 L665.2,430.2 L665.2,426" fill="none" stroke="#7d7a77" stroke-width="1.6"/><line x1="661" y1="426" x2="665.5" y2="421.5" stroke="#7d7a77" stroke-width="1.4"/><path d="M676.7,421.7 L685.3,430.3 M685.3,421.7 L676.7,430.3" stroke="#7d7a77" stroke-width="1.5" fill="none"/><path d="M292,453 L294.5,449.5 L300.5,449.5 L300.5,461 L294.5,461 L292,457Z" fill="#d0d0d0" stroke="#909090" stroke-width="1"/><path d="M291,455 L294,451" stroke="#909090" stroke-width="1"/><path d="M601.2,455.9 L607.5,450.7 L607.5,453.1 L614.9,453.1 L614.9,458.9 L607.5,458.9 L607.5,461.1Z" fill="#34558b"/><path d="M649.7,455.9 L643.1,450.7 L643.1,453.1 L636,453.1 L636,458.9 L643.1,458.9 L643.1,461.1Z" fill="#c0c0c0"/><rect x="625" y="446.5" width="1" height="19" fill="#d8d8d8"/><rect x="660" y="446.5" width="1" height="19" fill="#d8d8d8"/><path d="M682.72,454.59 L684.90,454.70 L684.90,457.10 L682.72,457.21 L682.26,458.32 L683.73,459.93 L682.03,461.63 L680.42,460.16 L679.31,460.62 L679.20,462.80 L676.80,462.80 L676.69,460.62 L675.58,460.16 L673.97,461.63 L672.27,459.93 L673.74,458.32 L673.28,457.21 L671.10,457.10 L671.10,454.70 L673.28,454.59 L673.74,453.48 L672.27,451.87 L673.97,450.17 L675.58,451.64 L676.69,451.18 L676.80,449.00 L679.20,449.00 L679.31,451.18 L680.42,451.64 L682.03,450.17 L683.73,451.87 L682.26,453.48Z" fill="#34558b"/><circle cx="678" cy="455.9" r="4.9" fill="#34558b"/><circle cx="678" cy="455.9" r="2.3" fill="#fdfdfc"/><path d="M377,574.5 L383,574.5 M380,574.5 L380,584 M383,578 L387,578 L387,584.5 M385.2,582.5 L387,584.5 L388.8,582.5" fill="none" stroke="#9a9a9a" stroke-width="1.5"/><path d="M1828.8999999999999,97.6 C1828.8999999999999,94.2 1836.0,94.2 1836.0,97.4 C1836.0,99.4 1832.5,99.2 1832.5,101.6" fill="none" stroke="#7d7a77" stroke-width="2"/><rect x="1831.3999999999999" y="102.5" width="2.2" height="1.8" fill="#7d7a77"/><rect x="1847.8" y="94.8" width="8.4" height="8.4" fill="none" stroke="#7d7a77" stroke-width="1.6"/><path d="M1872,94.8 L1867.8,94.8 L1867.8,103.2 L1876.2,103.2 L1876.2,99" fill="none" stroke="#7d7a77" stroke-width="1.6"/><line x1="1872" y1="99" x2="1876.5" y2="94.5" stroke="#7d7a77" stroke-width="1.4"/><path d="M1887.7,94.7 L1896.3,103.3 M1896.3,94.7 L1887.7,103.3" stroke="#7d7a77" stroke-width="1.5" fill="none"/><rect x="748" y="119" width="1" height="20" fill="#d8d8d8"/><rect x="783" y="119" width="1" height="20" fill="#d8d8d8"/><rect x="818" y="119" width="1" height="20" fill="#d8d8d8"/><rect x="853" y="119" width="1" height="20" fill="#d8d8d8"/><rect x="888" y="119" width="1" height="20" fill="#d8d8d8"/><rect x="923" y="119" width="1" height="20" fill="#d8d8d8"/><rect x="958" y="119" width="1" height="20" fill="#d8d8d8"/><rect x="993" y="119" width="1" height="20" fill="#d8d8d8"/><rect x="1028" y="119" width="1" height="20" fill="#d8d8d8"/><rect x="1063" y="119" width="1" height="20" fill="#d8d8d8"/><rect x="1098" y="119" width="1" height="20" fill="#d8d8d8"/><rect x="1133" y="119" width="1" height="20" fill="#d8d8d8"/><rect x="1168" y="119" width="1" height="20" fill="#d8d8d8"/><rect x="1203" y="119" width="1" height="20" fill="#d8d8d8"/><rect x="1238" y="119" width="1" height="20" fill="#d8d8d8"/><circle cx="730" cy="128" r="5" fill="none" stroke="#34558b" stroke-width="1.7"/><line x1="733.8" y1="131.8" x2="736.6" y2="134.6" stroke="#34558b" stroke-width="2.6" stroke-linecap="round"/><rect x="727" y="127.25" width="6" height="1.5" fill="#34558b"/><rect x="729.25" y="125" width="1.5" height="6" fill="#34558b"/><circle cx="765.4" cy="128" r="5" fill="none" stroke="#c2c2c2" stroke-width="1.7"/><line x1="769.1999999999999" y1="131.8" x2="772.0" y2="134.6" stroke="#c2c2c2" stroke-width="2.6" stroke-linecap="round"/><rect x="762.4" y="127.25" width="6" height="1.5" fill="#c2c2c2"/><g stroke="#34558b" stroke-width="2" fill="#34558b"><path d="M795,123 L799,127 M807,123 L803,127 M795,135 L799,131 M807,135 L803,131" fill="none"/></g><path d="M794,122 L798.5,122 L794,126.5Z M808.2,122 L803.7,122 L808.2,126.5Z M794,136 L798.5,136 L794,131.5Z M808.2,136 L803.7,136 L808.2,131.5Z" fill="#34558b"/><path d="M829.5,126 L829.5,122.5 L833,122.5 M839,122.5 L842.5,122.5 L842.5,126 M829.5,132 L829.5,135.5 L833,135.5 M839,135.5 L842.5,135.5 L842.5,132" fill="none" stroke="#34558b" stroke-width="1.5"/><path d="M833.5,125 L834,133.5 L836,131.5 L838,135 L839.2,134.3 L837.5,131 L840,130.8Z" fill="#fff" stroke="#34558b" stroke-width="0.9"/><circle cx="871" cy="128.8" r="6" fill="none" stroke="#34558b" stroke-width="1.5"/><path d="M871,121.5 L871,124 M871,133.6 L871,136 M863.7,128.8 L866.2,128.8 M875.8,128.8 L878.3,128.8" stroke="#34558b" stroke-width="1.5"/><circle cx="905" cy="128" r="5" fill="none" stroke="#34558b" stroke-width="1.8"/><line x1="908.75" y1="131.75" x2="912.20" y2="135.20" stroke="#34558b" stroke-width="2.6" stroke-linecap="round"/><path d="M935.5,122 L946.5,122 L941.0,126.4Z M936.3,135.9 L945.7,135.9 L941.0,131.5Z" fill="#bcbcbc"/><rect x="935.5" y="128" width="12" height="2.1" fill="#bcbcbc"/><path d="M970.7,126.3 L981.3000000000001,126.3 L976.0,121.8Z M970.7,131.2 L981.3000000000001,131.2 L976.0,135.8Z" fill="#bcbcbc"/><rect x="970.7" y="128.0" width="11" height="2.1" fill="#bcbcbc"/><rect x="1004" y="127.8" width="14.2" height="2.6" fill="#34558b"/><rect x="1009.8000000000001" y="122" width="2.6" height="14.2" fill="#34558b"/><rect x="1039.5" y="122.5" width="5.5" height="5.5" fill="none" stroke="#c4c4c4" stroke-width="1.1"/><path d="M1045,126 L1048,126 M1047,128 L1052,134 M1047,128 L1050,128.3 M1047,128 L1047.3,131" stroke="#c4c4c4" stroke-width="1.2" fill="none"/><path d="M1074.5,135 L1081,128.5" stroke="#c0c0c0" stroke-width="3.2" stroke-linecap="round"/><path d="M1079.5,127 C1079,124 1081.5,122 1084.5,122.5 L1082.5,125 L1084,126.8 L1086.8,124.8 C1087.6,128 1085,130.5 1081.5,129.8Z" fill="#c0c0c0"/><path d="M1118.7,123.25 L1109.95,123.25 L1109.95,133.8 L1120.4,133.8 L1120.4,128.5" fill="none" stroke="#34558b" stroke-width="1.5"/><path d="M1112.8,126.5 L1116.5,129.9 L1122.6000000000001,122.9" fill="none" stroke="#34558b" stroke-width="2.4"/><path d="M1144.5,135.5 L1149.5,130.5" stroke="#34558b" stroke-width="2.2"/><path d="M1147.5,127.5 L1152.5,123 L1158,128.5 L1153.5,133.5 L1151,133 L1148,130Z" fill="#34558b"/><path d="M1162.0,135.2 L1162.0,140.0 L1157.2,140.0Z" fill="#3a3a3a"/><path d="M1190.5,125 A6,6 0 1 0 1192,131" fill="none" stroke="#34558b" stroke-width="2"/><path d="M1187,122.6 L1193.5,121.5 L1193,128Z" fill="#34558b"/><path d="M1220,125 A3.2,3.2 0 1 0 1221.5,129" fill="none" stroke="#34558b" stroke-width="1.7"/><path d="M1218,122 L1221.5,122.5 L1219.5,125.5Z" fill="#34558b"/><path d="M1214,135 L1223,135 L1223,124 L1228,124" fill="none" stroke="#34558b" stroke-width="1.7"/><path d="M1893.72,127.69 L1895.90,127.80 L1895.90,130.20 L1893.72,130.31 L1893.26,131.42 L1894.73,133.03 L1893.03,134.73 L1891.42,133.26 L1890.31,133.72 L1890.20,135.90 L1887.80,135.90 L1887.69,133.72 L1886.58,133.26 L1884.97,134.73 L1883.27,133.03 L1884.74,131.42 L1884.28,130.31 L1882.10,130.20 L1882.10,127.80 L1884.28,127.69 L1884.74,126.58 L1883.27,124.97 L1884.97,123.27 L1886.58,124.74 L1887.69,124.28 L1887.80,122.10 L1890.20,122.10 L1890.31,124.28 L1891.42,124.74 L1893.03,123.27 L1894.73,124.97 L1893.26,126.58Z" fill="#34558b"/><circle cx="1889" cy="129" r="4.9" fill="#34558b"/><circle cx="1889" cy="129" r="2.3" fill="#fdfdfc"/><rect x="1251" y="124" width="12" height="3.2" fill="#9a9a9a"/><rect x="1251" y="130.9" width="12" height="3.2" fill="#9a9a9a"/><path d="M1423.5,126.5 L1428.0,131.5 L1432.5,126.5" fill="none" stroke="#555" stroke-width="1.9"/><path d="M393.7,686.7 L400.3,693.3 M400.3,686.7 L393.7,693.3" stroke="#7d7a77" stroke-width="1.3" fill="none"/><path d="M1829.1,687.0 C1829.1,683.6 1836.2,683.6 1836.2,686.8 C1836.2,688.8 1832.7,688.6 1832.7,691.0" fill="none" stroke="#7d7a77" stroke-width="2"/><rect x="1831.6" y="691.9" width="2.2" height="1.8" fill="#7d7a77"/><rect x="1846.8" y="691.5" width="10" height="1.9" fill="#7d7a77"/><rect x="1867.8" y="684.3" width="8.4" height="8.4" fill="none" stroke="#7d7a77" stroke-width="1.6"/><path d="M1892,684.3 L1887.8,684.3 L1887.8,692.7 L1896.2,692.7 L1896.2,688.5" fill="none" stroke="#7d7a77" stroke-width="1.6"/><line x1="1892" y1="688.5" x2="1896.5" y2="684.0" stroke="#7d7a77" stroke-width="1.4"/><circle cx="301" cy="717" r="4.9" fill="none" stroke="#34558b" stroke-width="1.8"/><line x1="304.68" y1="720.67" x2="308.10" y2="724.10" stroke="#34558b" stroke-width="2.6" stroke-linecap="round"/><path d="M331,711 L342,711 L336.5,715.4Z M331.8,724.9 L341.2,724.9 L336.5,720.5Z" fill="#34558b"/><rect x="331" y="717" width="12" height="2.1" fill="#34558b"/><path d="M366,715.5 L376.6,715.5 L371.3,711Z M366,720.4 L376.6,720.4 L371.3,725Z" fill="#34558b"/><rect x="366" y="717.2" width="11" height="2.1" fill="#34558b"/><rect x="402" y="710.8" width="3.2" height="14" fill="#34558b"/><rect x="409" y="710.8" width="3.2" height="14" fill="#34558b"/><rect x="436" y="711" width="10" height="12.3" fill="#34558b"/><rect x="438.3" y="713.7" width="9" height="10.9" fill="#ffffff" stroke="#34558b" stroke-width="1.5"/><rect x="440.3" y="717" width="5" height="1" fill="#34558b"/><rect x="440.3" y="719" width="5" height="1" fill="#34558b"/><rect x="440.3" y="721" width="5" height="1" fill="#34558b"/><rect x="470.5" y="711.2" width="13" height="13.3" fill="#fff" stroke="#34558b" stroke-width="1.3"/><rect x="470.5" y="711" width="13.3" height="2" fill="#34558b"/><path d="M470.5,716.5 L483.5,716.5 M470.5,720.3 L483.5,720.3 M474.5,713 L474.5,724.5 M479.5,713 L479.5,724.5" stroke="#34558b" stroke-width="1"/><rect x="475" y="713" width="4.2" height="11.5" fill="#6a8ad0"/><rect x="506" y="711.6" width="11.8" height="2" fill="#34558b"/><rect x="510" y="710.3" width="4" height="1.6" fill="#34558b"/><path d="M507.2,714.3 L516.9,714.3 L516.9,724.8 L507.2,724.8Z" fill="#34558b"/><rect x="509.6" y="716" width="1.3" height="7" fill="#fff"/><rect x="513.2" y="716" width="1.3" height="7" fill="#fff"/><rect x="319" y="708" width="1" height="20" fill="#d8d8d8"/><rect x="354" y="708" width="1" height="20" fill="#d8d8d8"/><rect x="389" y="708" width="1" height="20" fill="#d8d8d8"/><rect x="424" y="708" width="1" height="20" fill="#d8d8d8"/><rect x="459" y="708" width="1" height="20" fill="#d8d8d8"/><rect x="494" y="708" width="1" height="20" fill="#d8d8d8"/><path d="M297.5,736 L297.5,739 M297.5,749 L297.5,754" stroke="#8c8c8c" stroke-width="1"/><path d="M297.5,738.5 L302.8,742.0 L302.8,749.5 L292.4,749.5 L292.4,742.0Z" fill="#fdfdfc" stroke="#8c8c8c" stroke-width="1"/><path d="M294.6,744.3 L300.4,744.3" stroke="#8c8c8c" stroke-width="1"/><path d="M292.4,753.3 L302.8,753.3 L302.8,760.3 L297.5,764.0999999999999 L292.4,760.3Z" fill="#fdfdfc" stroke="#8c8c8c" stroke-width="1"/><path d="M294.6,758.3 L300.4,758.3" stroke="#8c8c8c" stroke-width="1"/><path d="M297.5,783.2 L302.8,786.7 L302.8,794.2 L292.4,794.2 L292.4,786.7Z" fill="#fdfdfc" stroke="#8c8c8c" stroke-width="1"/><path d="M294.6,789.0 L300.4,789.0" stroke="#8c8c8c" stroke-width="1"/><path d="M297.5,764 L297.5,783" stroke="#8c8c8c" stroke-width="1" stroke-dasharray="3,3"/><path d="M297.5,794.5 L297.5,935" stroke="#8c8c8c" stroke-width="1" stroke-dasharray="3,3"/><path d="M1884.8,746.5 L1889.55,741 L1894.3,746.5" fill="none" stroke="#707070" stroke-width="1.9"/><path d="M1884.8,928 L1889.55,933.5 L1894.3,928" fill="none" stroke="#707070" stroke-width="1.9"/><path d="M320.8,940 L315.3,944.75 L320.8,949.5" fill="none" stroke="#707070" stroke-width="1.9"/><path d="M1873.3,940 L1878.8,944.75 L1873.3,949.5" fill="none" stroke="#707070" stroke-width="1.9"/><text x="1203" y="384" font-family="Liberation Sans" font-size="9" textLength="16" lengthAdjust="spacingAndGlyphs" fill="#111">Vitis</text><text x="1219.5" y="379.3" font-family="Liberation Sans" font-size="5" textLength="8" lengthAdjust="spacingAndGlyphs" fill="#111">TM</text><text x="1232" y="384" font-family="Liberation Sans" font-size="9" textLength="18" lengthAdjust="spacingAndGlyphs" fill="#111">HLS</text><path d="M1207,406.2 L1220.3,402 L1234.6,412.8 L1245,387.1 L1244.1,421.8 L1229.8,426.5Z" fill="#c41010"/><path d="M1207,406.2 L1220.3,402 L1234.6,412.8 L1229.8,426.5Z" fill="#8a0a0a"/><path d="M1224.55,414.53 L1227.35,414.81 L1227.35,419.19 L1224.55,419.47 L1223.41,421.44 L1224.57,424.00 L1220.77,426.19 L1219.14,423.91 L1216.86,423.91 L1215.23,426.19 L1211.43,424.00 L1212.59,421.44 L1211.45,419.47 L1208.65,419.19 L1208.65,414.81 L1211.45,414.53 L1212.59,412.56 L1211.43,410.00 L1215.23,407.81 L1216.86,410.09 L1219.14,410.09 L1220.77,407.81 L1224.57,410.00 L1223.41,412.56Z" fill="#2ec4a5"/><circle cx="1218" cy="417" r="7.0" fill="#2ec4a5"/><circle cx="1218" cy="417" r="3.4" fill="#ececec"/><path d="M1378,392.5 L1395,392.5 L1404,402.3 L1395,412.3 L1378,412.3Z" fill="#f07a64" stroke="#e0b040" stroke-width="0.8"/><ellipse cx="1390" cy="402.3" rx="6.5" ry="4.5" fill="#d6c8c0"/><path d="M763,379.5 L763,395 L766.5,391.5 L769.5,397.5 L772,396.3 L769,390.5 L774,390.5Z" fill="#2a2a2a" stroke="#fff" stroke-width="0.8"/></svg>
</body></html>
